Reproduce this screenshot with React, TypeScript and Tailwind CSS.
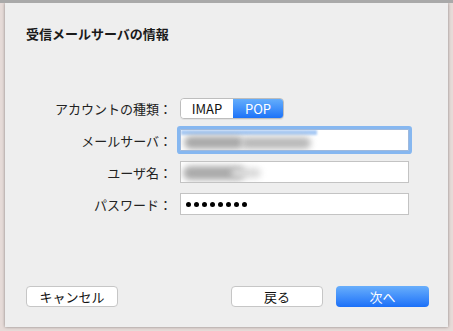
const font = { fontFamily: '"Noto Sans CJK JP", "Noto Sans", sans-serif' }

function Field({ label, children, focused }: { label: string; children?: React.ReactNode; focused?: boolean }) {
  return (
    <div className="flex items-center gap-[8px]">
      <div className="w-[167px] text-right text-[13px] leading-none text-[#222]">{label}</div>
      <div
        className={
          focused
            ? 'relative h-[22px] w-[229px] overflow-hidden border border-[#9fb9dc] bg-white rounded-[1px] ring-[3px] ring-[#86b7f0]'
            : 'relative h-[22px] w-[229px] overflow-hidden border border-[#c3c3c3] bg-white'
        }
      >
        {children}
      </div>
    </div>
  )
}

export default function App() {
  return (
    <div style={font} className="w-[453px] h-[331px] overflow-hidden bg-[#e6dbd8] border-t-[3px] border-[#a9a9a9]">
      <div className="ml-[5px] w-[443px] h-[324px] bg-[#eeeeee] shadow-[0_0_3px_rgba(0,0,0,0.4)] flex flex-col pl-[21px] pr-[19px] pt-[24px] pb-[20px]">
        <h1 className="text-[13px] leading-none font-bold text-[#1a1a1a]">受信メールサーバの情報</h1>

        <div className="mt-[58px] -ml-[21px] flex flex-col gap-[10px]">
          <div className="flex items-center gap-[8px]">
            <div className="w-[167px] text-right text-[13px] leading-none text-[#222]">アカウントの種類：</div>
            <div className="flex h-[21px] w-[104px] rounded-[4px] border border-[#bdbdbd] overflow-hidden text-[13px] leading-none shadow-[0_1px_0_rgba(0,0,0,0.05)]">
              <div className="flex w-[52px] items-center justify-center bg-white text-[#111]">IMAP</div>
              <div className="flex flex-1 items-center justify-center bg-gradient-to-b from-[#64adfb] to-[#1b72f8] text-white">POP</div>
            </div>
          </div>

          <Field label="メールサーバ：" focused>
            <div className="absolute left-0 top-0 h-[5px] w-[136px] bg-[#a9cbf5] blur-[1px]" />
            <div className="absolute left-[3px] top-[6px] h-[13px] w-[60px] rounded-full bg-[#a9a9a9] blur-[3px]" />
            <div className="absolute left-[60px] top-[7px] h-[12px] w-[70px] rounded-full bg-[#b9b9b9] blur-[3px]" />
          </Field>

          <Field label="ユーザ名：">
            <div className="absolute left-[2px] top-[4px] h-[14px] w-[62px] rounded-full bg-[#ababab] blur-[3px]" />
            <div className="absolute left-[50px] top-[6px] h-[10px] w-[30px] rounded-full bg-[#dadada] blur-[3px]" />
          </Field>

          <Field label="パスワード：">
            <div className="flex h-full items-center gap-[3px] pl-[5px]">
              {Array.from({ length: 8 }).map((_, i) => (
                <div key={i} className="h-[5px] w-[5px] rounded-full bg-black" />
              ))}
            </div>
          </Field>
        </div>

        <div className="flex-1" />

        <div className="flex items-center text-[13px] leading-none">
          <button className="h-[21px] w-[92px] rounded-[4px] border border-[#c6c6c6] bg-white text-[#111]">キャンセル</button>
          <div className="flex-1" />
          <button className="h-[21px] w-[92px] rounded-[4px] border border-[#c6c6c6] bg-white text-[#111]">戻る</button>
          <button className="ml-[13px] h-[21px] w-[93px] rounded-[4px] bg-gradient-to-b from-[#68aefb] to-[#1a6ff8] text-white">次へ</button>
        </div>
      </div>
    </div>
  )
}
